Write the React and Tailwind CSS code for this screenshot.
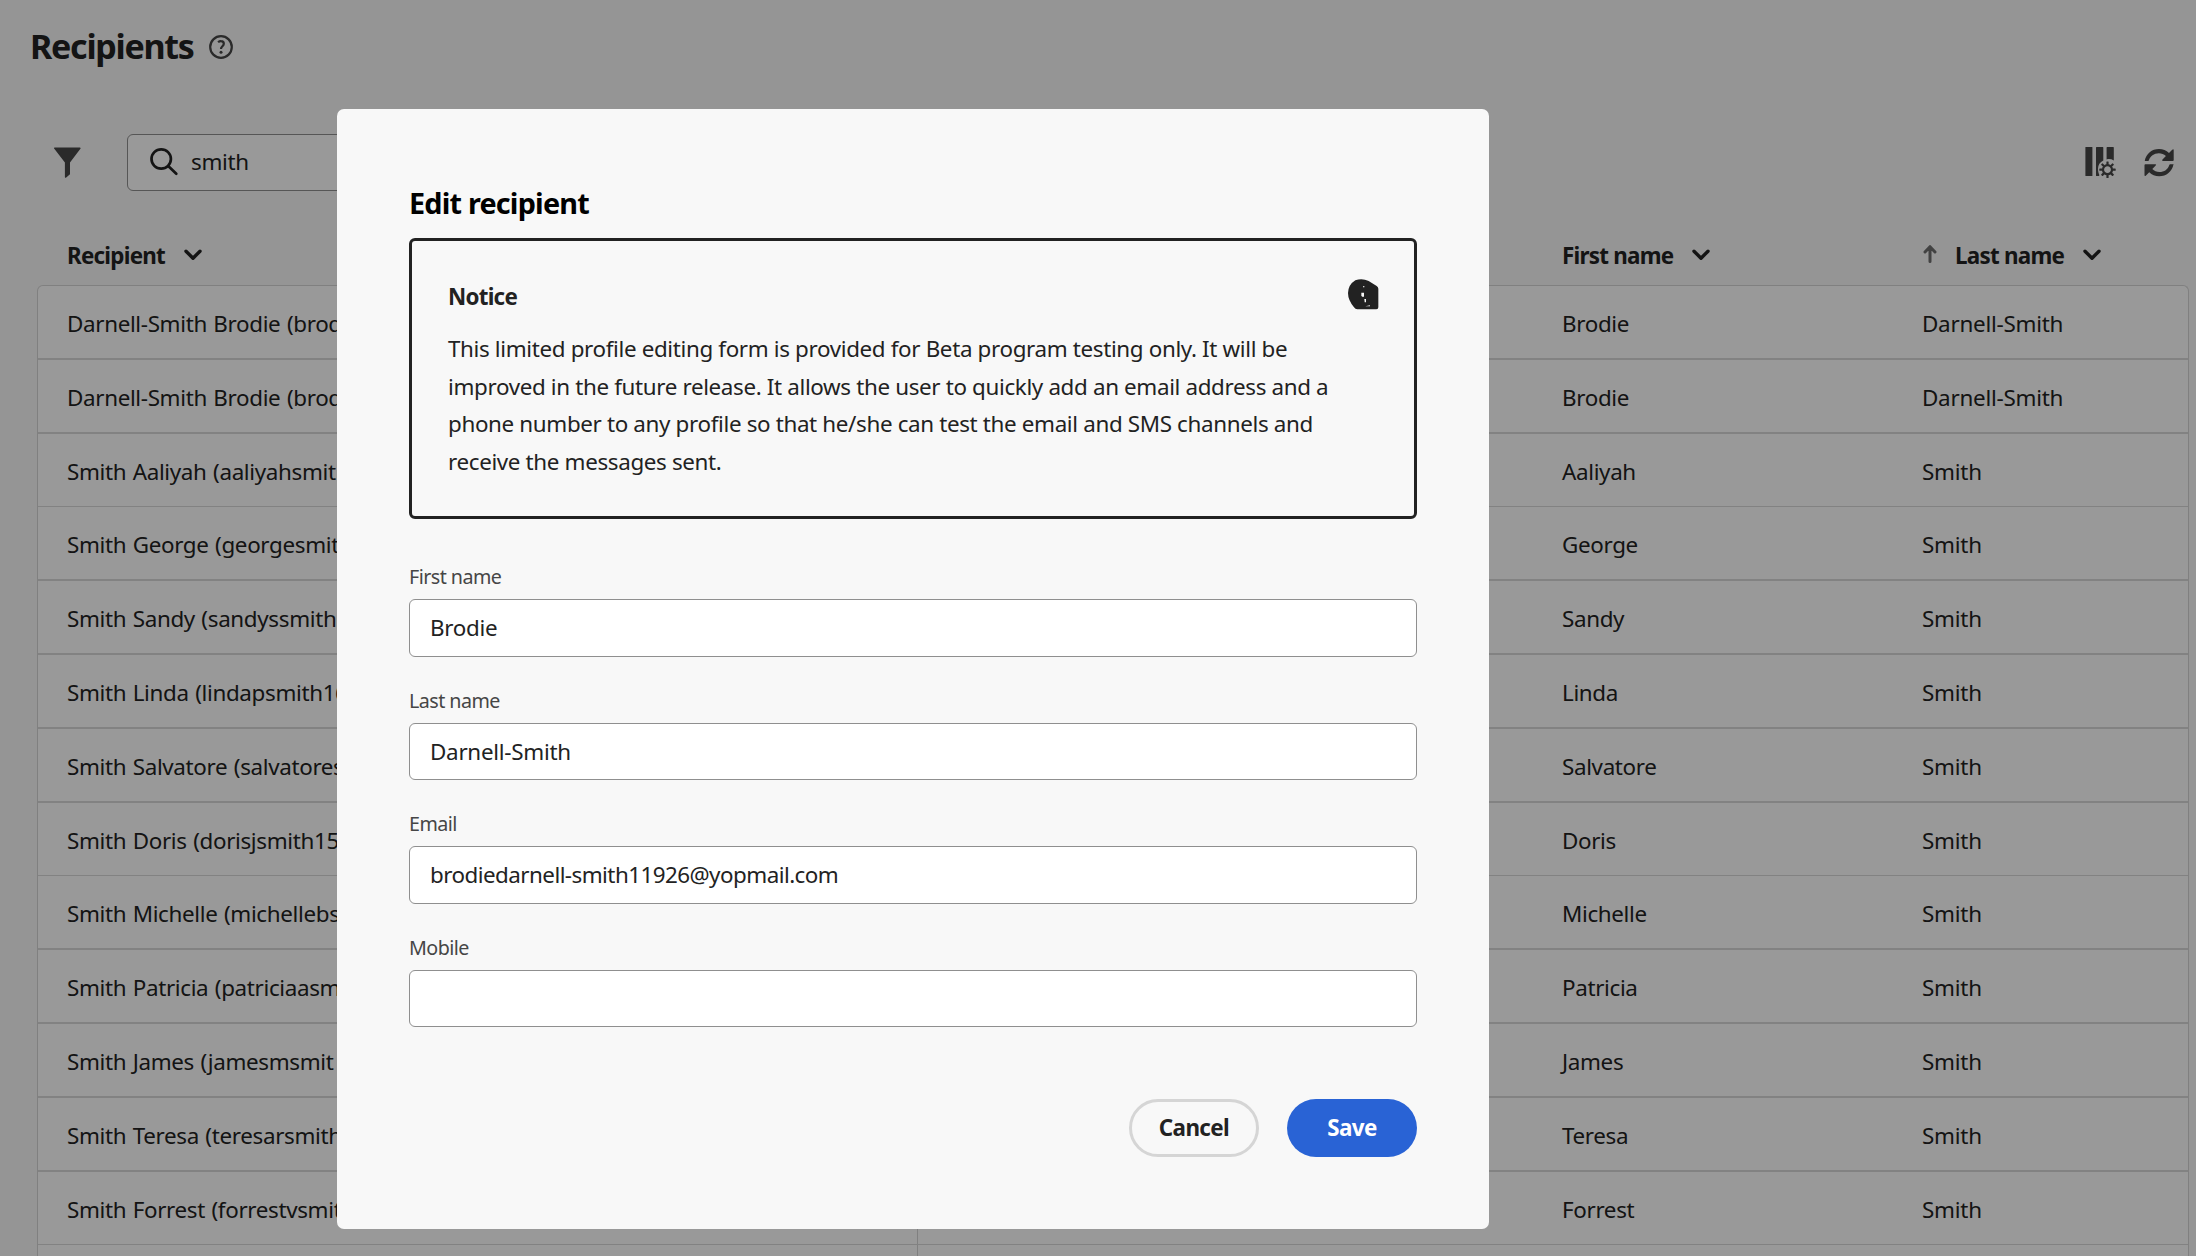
import React from 'react';

const rows = [
  ['Darnell-Smith Brodie (brod', 'Brodie', 'Darnell-Smith'],
  ['Darnell-Smith Brodie (brod', 'Brodie', 'Darnell-Smith'],
  ['Smith Aaliyah (aaliyahsmit', 'Aaliyah', 'Smith'],
  ['Smith George (georgesmit', 'George', 'Smith'],
  ['Smith Sandy (sandyssmith', 'Sandy', 'Smith'],
  ['Smith Linda (lindapsmith16', 'Linda', 'Smith'],
  ['Smith Salvatore (salvatores', 'Salvatore', 'Smith'],
  ['Smith Doris (dorisjsmith159', 'Doris', 'Smith'],
  ['Smith Michelle (michellebs', 'Michelle', 'Smith'],
  ['Smith Patricia (patriciaasm', 'Patricia', 'Smith'],
  ['Smith James (jamesmsmit', 'James', 'Smith'],
  ['Smith Teresa (teresarsmith', 'Teresa', 'Smith'],
  ['Smith Forrest (forrestvsmit', 'Forrest', 'Smith'],
  ['', '', ''],
];

const fields = [
  ['First name', 'Brodie', 'tracking-[-0.3px]'],
  ['Last name', 'Darnell-Smith', 'tracking-[-0.26px]'],
  ['Email', 'brodiedarnell-smith11926@yopmail.com', 'tracking-[-0.54px]'],
  ['Mobile', '', 'tracking-[-0.3px]'],
];

const noticeLines = [
  'This limited profile editing form is provided for Beta program testing only. It will be',
  'improved in the future release. It allows the user to quickly add an email address and a',
  'phone number to any profile so that he/she can test the email and SMS channels and',
  'receive the messages sent.',
];

function Chevron() {
  return (
    <svg className="h-3 w-[18px] shrink-0 -translate-y-px" viewBox="0 0 18 12" fill="none" stroke="#222" strokeWidth="3.4" strokeLinecap="round" strokeLinejoin="round">
      <path d="M2 2.2 9 9.2 16 2.2" />
    </svg>
  );
}

function HelpIcon() {
  return (
    <svg className="size-6" viewBox="0 0 24 24" fill="none" stroke="#464646" strokeWidth="2.2">
      <circle cx="12" cy="12" r="10.8" />
      <path d="M9.1 7.3c1-.9 2-1.2 3-1.1 1.7.1 2.7 1.1 2.7 2.5 0 2.5-2.9 2.7-2.8 5.3" />
      <circle cx="12" cy="17.3" r="1.5" fill="#464646" stroke="none" />
    </svg>
  );
}

function FilterIcon() {
  return (
    <svg className="h-8 w-[27px]" viewBox="0 0 27 32" fill="#464646">
      <path d="M1 .5h24.8a.7.7 0 0 1 .6 1.2L16 15.600V27.300L12.200 30.600a.8.8 0 0 1-1.300-.6V15.600L.3 1.700A.7.7 0 0 1 1 .5Z" />
    </svg>
  );
}

function SearchIcon() {
  return (
    <svg className="size-[30px]" viewBox="0 0 30 30" fill="none" stroke="#222" strokeWidth="2.7" strokeLinecap="round">
      <circle cx="12.200" cy="12" r="9.700" />
      <path d="M19.200 19 27.300 26.800" />
    </svg>
  );
}

function ColumnSettingsIcon() {
  return (
    <svg className="h-[33px] w-8" viewBox="0 0 32 33" fill="#464646">
      <path d="M1 1h5.800q.6 0 .6.600V30H1q-.6 0-.6-.6V1.600Q.4 1 1 1Z" />
      <path d="M11.600 1h6.100q.6 0 .6.600V14.500C14.800 16 13.200 19 13 22.500c-.1 2.200.4 4.300 1.200 6V30h-2.600q-.6 0-.6-.6V1.600q0-.6.6-.6Z" />
      <path d="M22.200 1h6q.6 0 .6.600V14.400c-2.300-1.300-4.700-1.600-7.200-1V1.600q0-.6.6-.6Z" />
      <g transform="translate(22.500 23.700)">
        <circle r="4.500" fill="none" stroke="#464646" strokeWidth="2.200" />
        {[0, 45, 90, 135, 180, 225, 270, 315].map((a) => (
          <rect key={a} x="-1.100" y="-8.200" width="2.200" height="3.500" rx=".5" transform={`rotate(${a})`} />
        ))}
      </g>
    </svg>
  );
}

function RefreshIcon() {
  const half = 'M.7 12.900C2.200 5.500 7.800.9 15 .9c4 0 7.300 1.400 10 4L28.200 1.700q1.500-1.300 1.500.6V12q0 .9-.9.9H19q-1.700 0-.5-1.300l3.400-3.500c-2-2-4.300-2.900-7-2.900-5 0-8.700 2.900-10 7.100q-.2.600-.8.600H1.200q-.6 0-.5-.6Z';
  return (
    <svg className="h-[30px] w-[31px]" viewBox="0 0 31 30" fill="#464646">
      <path d={half} />
      <path d={half} transform="rotate(180 15.100 14.600)" />
    </svg>
  );
}

function SortArrow() {
  return (
    <svg className="h-5 w-3.5 -translate-y-0.5" viewBox="0 0 14 20" fill="none" stroke="#6e6e6e" strokeWidth="3" strokeLinecap="round" strokeLinejoin="round">
      <path d="M7 17.500V3M2 8 7 2.700 12 8" />
    </svg>
  );
}

function NoticeIcon() {
  return (
    <svg className="h-[31px] w-[31px]" viewBox="0 0 93 93" fill="#222">
      <path d="M0 42Q1 17 22 4 42-4 62 6L86 21Q91 24 91 29V85Q91 91 85 91H28Q22 91 18 85 0 63 0 42Z" />
      <g fill="#f8f8f8">
        <path d="M46 21h3v4h-4z" />
        <path d="M40 41h8v12h-6l-2-4z" />
        <path d="M49 60h5v10h-4z" />
        <path d="M52 82l14-3v3z" />
      </g>
    </svg>
  );
}

export default function App() {
  return (
    <div className="relative h-[1256px] w-[2196px] overflow-hidden bg-[#f8f8f8] font-['Noto_Sans','Open_Sans',sans-serif] text-[22.4px] tracking-[-0.34px] text-[#222]">
      <header className="flex h-[134px] items-start gap-[15px] pt-[26px] pl-[30px]">
        <h1 className="text-[34px] leading-10 font-bold tracking-[-1.25px]">Recipients</h1>
        <div className="pt-[9px]">
          <HelpIcon />
        </div>
      </header>

      <div className="flex h-[57px] items-center pr-[21px] pl-[54px]">
        <FilterIcon />
        <div className="ml-[46px] flex h-[57px] w-[420px] items-center rounded-md border border-[#8f8f8f] bg-white pb-0.5 pl-[21px]">
          <SearchIcon />
          <span className="ml-3">smith</span>
        </div>
        <div className="ml-auto flex items-center gap-[27px]">
          <ColumnSettingsIcon />
          <RefreshIcon />
        </div>
      </div>

      <div className="mt-[35px] mb-[-1px] flex h-[60px] pl-[67px] font-bold tracking-[-0.75px]">
        <div className="flex w-[1495px] items-center gap-[19px]">
          Recipient
          <Chevron />
        </div>
        <div className="flex w-[361px] items-center gap-[19px]">
          First name
          <Chevron />
        </div>
        <div className="flex items-center">
          <SortArrow />
          <span className="mr-[19px] ml-[18px]">Last name</span>
          <Chevron />
        </div>
      </div>

      <div className="ml-[37px] w-[2152px] rounded-t-md border border-b-0 border-[#d5d5d5] bg-white">
        {rows.map(([name, first, last], i) => (
          <div
            key={i}
            className={i % 5 === 2 ? 'flex h-[73px] border-b border-[#d9d9d9]' : 'flex h-[74px] border-b-2 border-[#d9d9d9]'}
          >
            <div className="flex w-[880px] items-center border-r border-[#d5d5d5] pt-[3px] pl-[29px] whitespace-nowrap">
              <span className="w-[271px] overflow-hidden [word-spacing:1px]">{name}</span>
            </div>
            <div className="ml-[644px] flex w-[360px] items-center pt-[3px]">{first}</div>
            <div className="flex items-center pt-[3px] tracking-[-0.24px]">{last}</div>
          </div>
        ))}
      </div>

      <div className="absolute inset-0 flex items-start bg-black/40 pt-[109px] pl-[337px]">
        <section className="h-[1120px] w-[1152px] rounded-[7px] bg-[#f8f8f8] px-[72px] pt-[76px]">
          <h2 className="text-[28.8px] leading-9 font-bold tracking-[-0.8px] text-black">Edit recipient</h2>

          <div className="mt-[17px] flex h-[281px] justify-between rounded-md border-[3px] border-[#222] pt-[38px] pr-[35px] pl-9">
            <div>
              <h3 className="pt-[3px] leading-[30px] font-bold tracking-[-0.75px]">Notice</h3>
              <p className="mt-[18px] leading-[37.7px] tracking-[-0.35px] whitespace-nowrap">
                {noticeLines.map((line) => (
                  <span key={line} className="block">{line}</span>
                ))}
              </p>
            </div>
            <NoticeIcon />
          </div>

          <div className="mt-[45px] flex flex-col gap-[30px]">
            {fields.map(([label, value, tracking]) => (
              <div key={label}>
                <div className="text-[19.7px] leading-[26px] tracking-[-0.55px] text-[#464646]">{label}</div>
                <div className={`mt-[9px] mb-px flex h-[57.6px] items-center rounded-md border border-[#8f8f8f] bg-white pl-5 ${tracking}`}>
                  {value}
                </div>
              </div>
            ))}
          </div>

          <div className="mt-[70.6px] flex justify-end gap-7 font-bold tracking-[-0.6px]">
            <div className="flex h-[58px] w-[130px] items-center justify-center rounded-full border-[3px] border-[#d5d5d5]">Cancel</div>
            <div className="flex h-[58px] w-[130px] items-center justify-center rounded-full bg-[#2963d5] text-white">Save</div>
          </div>
        </section>
      </div>
    </div>
  );
}
